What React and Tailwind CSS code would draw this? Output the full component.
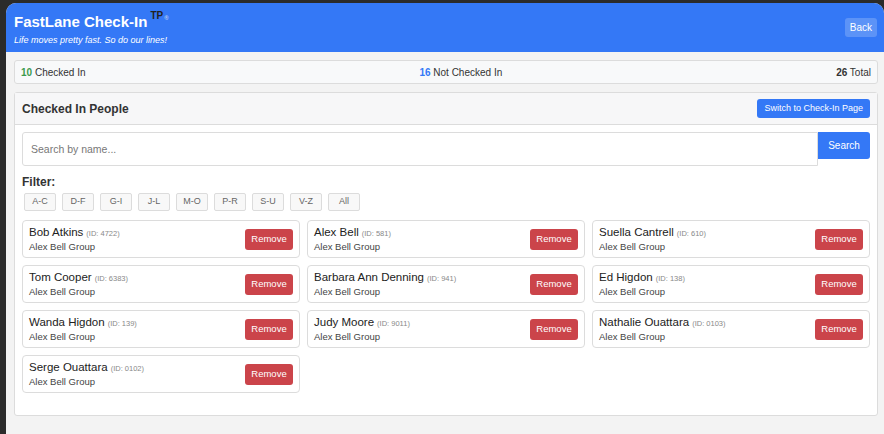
import React from "react";

const people = [
  { name: "Bob Atkins", id: "4722" },
  { name: "Alex Bell", id: "581" },
  { name: "Suella Cantrell", id: "610" },
  { name: "Tom Cooper", id: "6383" },
  { name: "Barbara Ann Denning", id: "941" },
  { name: "Ed Higdon", id: "138" },
  { name: "Wanda Higdon", id: "139" },
  { name: "Judy Moore", id: "9011" },
  { name: "Nathalie Ouattara", id: "0103" },
  { name: "Serge Ouattara", id: "0102" },
];

const filters = ["A-C", "D-F", "G-I", "J-L", "M-O", "P-R", "S-U", "V-Z", "All"];

function PersonCard({ person }) {
  return (
    <div className="h-[38px] border border-[#dcdcdc] rounded-[4px] bg-white flex items-center justify-between pl-[6px] pr-[6px]">
      <div className="flex flex-col">
        <div className="text-[11.5px] leading-[15px] text-[#222]">
          {person.name}
          <span className="text-[7.5px] text-[#888] ml-[3px]">(ID: {person.id})</span>
        </div>
        <div className="text-[9.5px] leading-[12px] text-[#444]">Alex Bell Group</div>
      </div>
      <button className="w-[48px] h-[21px] rounded-[3px] bg-[#cb444a] text-white text-[9.5px]">
        Remove
      </button>
    </div>
  );
}

export default function App() {
  return (
    <div className="w-[884px] h-[434px] bg-[#2b2b2b] pl-[6px] pt-[3px] font-['Liberation_Sans',Arial,sans-serif] overflow-hidden">
      <div className="h-full bg-[#f3f3f3] rounded-tl-[10px] rounded-tr-[10px] overflow-hidden">
        {/* header */}
        <header className="h-[49px] bg-[#3478f6] flex items-start justify-between pl-[8px] pr-[7px] pt-[9px]">
          <div className="flex flex-col">
            <h1 className="flex items-start font-bold">
              <span className="text-[15px] leading-[20px] text-white">FastLane Check-In</span>
              <span className="text-[10px] leading-[10px] text-[#222] ml-[3px] -mt-[1px]">TP</span>
              <span className="text-[6px] leading-[6px] text-[#b9cbee] ml-[1px] mt-[3px]">®</span>
            </h1>
            <p className="text-[9px] leading-[12px] italic text-white mt-[2px]">
              Life moves pretty fast. So do our lines!
            </p>
          </div>
          <button className="mt-[6px] h-[19px] px-[5px] rounded-[3px] bg-white/20 text-white text-[10px]">
            Back
          </button>
        </header>

        <div className="pl-[8px] pr-[6px] pt-[8px]">
          {/* stats */}
          <div className="h-[24px] border border-[#dcdcdc] rounded-[3px] bg-[#f8f9fa] flex items-center justify-between px-[6px] text-[10px] text-[#333]">
            <div>
              <span className="font-bold text-[#3c9a4c]">10</span> Checked In
            </div>
            <div>
              <span className="font-bold text-[#3478f6]">16</span> Not Checked In
            </div>
            <div>
              <span className="font-bold">26</span> Total
            </div>
          </div>

          {/* main card */}
          <div className="mt-[8px] border border-[#dcdcdc] rounded-[3px] bg-white">
            <div className="h-[32px] bg-[#f7f7f8] border-b border-[#dcdcdc] flex items-center justify-between pl-[7px] pr-[7px]">
              <h2 className="text-[12px] font-bold text-[#333]">Checked In People</h2>
              <button className="h-[19px] px-[7px] rounded-[3px] bg-[#3478f6] text-white text-[9px]">
                Switch to Check-In Page
              </button>
            </div>

            <div className="px-[7px] pt-[7px] pb-[22px]">
              <div className="flex items-start">
                <input
                  className="flex-1 h-[34px] border border-[#dcdcdc] rounded-l-[3px] px-[8px] text-[10.5px] outline-none placeholder:text-[#777]"
                  placeholder="Search by name..."
                />
                <button className="w-[52px] h-[27px] bg-[#3478f6] text-white text-[10px] rounded-r-[3px]">
                  Search
                </button>
              </div>

              <div className="mt-[9px] text-[12px] leading-[14px] font-bold text-[#333]">Filter:</div>
              <div className="mt-[4px] flex gap-[6px] pl-[2px]">
                {filters.map((f) => (
                  <button
                    key={f}
                    className="w-[32px] h-[18px] border border-[#dcdcdc] rounded-[2px] bg-[#f8f8f8] text-[9px] text-[#666]"
                  >
                    {f}
                  </button>
                ))}
              </div>

              <div className="mt-[9px] grid grid-cols-3 gap-[7px]">
                {people.map((p) => (
                  <PersonCard key={p.name} person={p} />
                ))}
              </div>
            </div>
          </div>
        </div>
      </div>
    </div>
  );
}
